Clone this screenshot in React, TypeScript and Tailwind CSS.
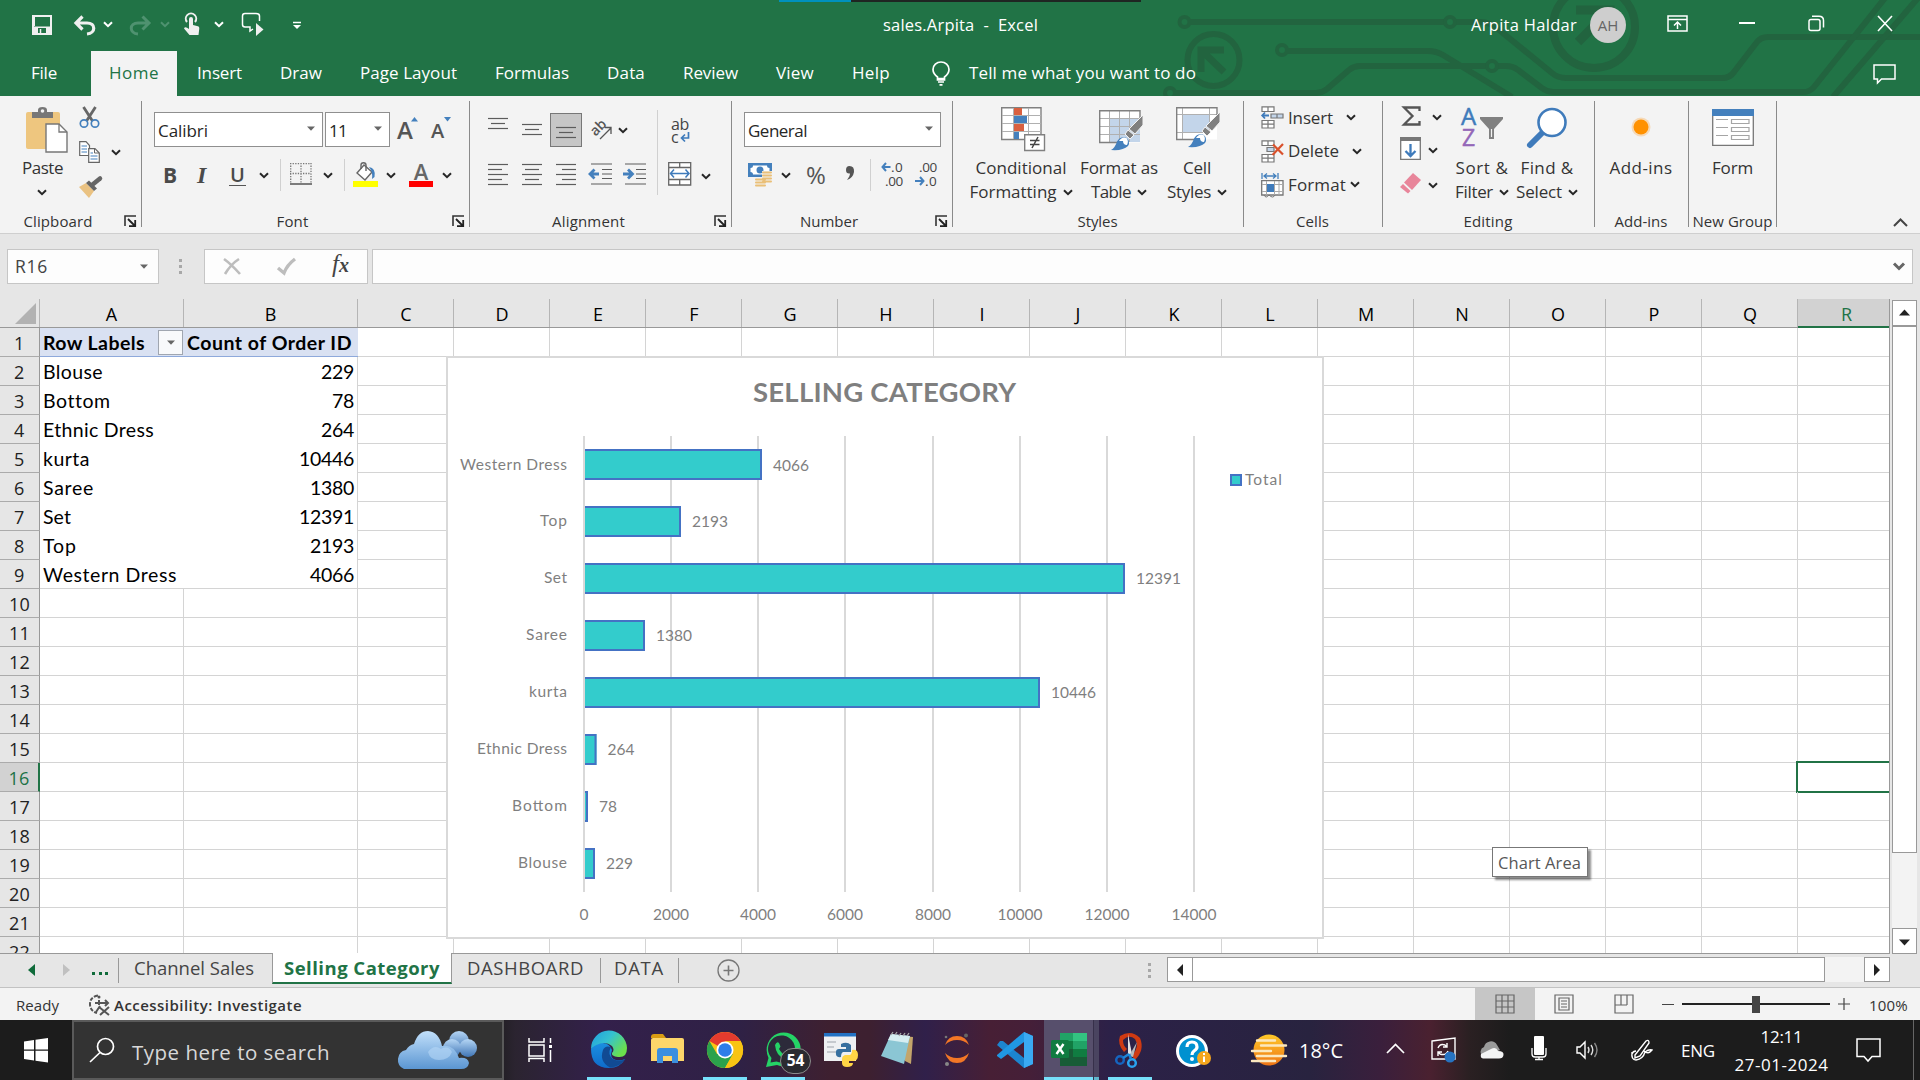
import { useLayoutEffect, useRef, useState } from "react";
import type { ReactNode } from "react";

/* Text that is tracked so that it fills exactly the given width. */
function T({ w, children, className = "" }: { w: number; children: string; className?: string }) {
  const ref = useRef<HTMLSpanElement>(null);
  const [ls, setLs] = useState(0);
  useLayoutEffect(() => {
    const el = ref.current;
    if (!el) return;
    const natural = el.getBoundingClientRect().width - ls * children.length;
    setLs((w - natural) / children.length);
  }, [w, children]);
  return (
    <span className={"block shrink-0 whitespace-pre " + className} style={{ width: w }}>
      <span ref={ref} className="inline-block" style={{ letterSpacing: ls }}>
        {children}
      </span>
    </span>
  );
}

function S({ w, h, className = "", children }: { w: number; h: number; className?: string; children: ReactNode }) {
  return (
    <svg width={w} height={h} viewBox={`0 0 ${w} ${h}`} fill="none" className={"block shrink-0 overflow-visible " + className}>
      {children}
    </svg>
  );
}

const Chev = ({ className = "", color = "#262626" }: { className?: string; color?: string }) => (
  <S w={10} h={7} className={className}>
    <path d="M1 1.2 5 5.2 9 1.2" stroke={color} strokeWidth="2" />
  </S>
);
const Tri = ({ className = "" }: { className?: string }) => (
  <S w={8} h={5} className={className}>
    <path d="M0 .5H8L4 4.8Z" fill="#666" />
  </S>
);
const Sep = ({ className = "" }: { className?: string }) => <div className={"w-px shrink-0 bg-[#d0d0d0] " + className} />;
const Launcher = ({ className = "" }: { className?: string }) => (
  <S w={13} h={12} className={className}>
    <path d="M1 11V1H12" stroke="#333" strokeWidth="1.6" />
    <path d="M4 4 11 11M11.2 5V11.2H5" stroke="#222" strokeWidth="1.8" />
  </S>
);

function Group({ width, label, lw, launcher, children }: { width: string; label: string; lw: number; launcher?: boolean; children: ReactNode }) {
  return (
    <section className={"relative flex h-[137px] shrink-0 flex-col " + width}>
      <div className="h-[114px] shrink-0">{children}</div>
      <div className="flex h-[23px] items-center justify-center text-[15px] leading-[20px] text-[#333]">
        <T w={lw} className="-mt-px">{label}</T>
      </div>
      {launcher && <Launcher className="absolute right-[5px] bottom-[6px]" />}
      <div className="absolute right-0 top-[5px] h-[126px] w-px bg-[#8a8a8a]" />
    </section>
  );
}

/* ---------- title bar ---------- */
function Circuit() {
  return (
    <svg width="760" height="96" viewBox="1160 0 760 96" fill="none" stroke="#22643f" strokeWidth="6" className="pointer-events-none absolute right-0 top-0">
      <circle cx="1184.500" cy="22" r="5" strokeWidth="4" />
      <path d="M1190 22H1444M1456 22H1480Q1490 22 1498 29L1552 73Q1558 78 1566 78H1722Q1730 78 1734 72L1757 42Q1761 37 1768 37H1920" />
      <circle cx="1450" cy="22" r="5" strokeWidth="4" />
      <circle cx="1213.500" cy="60" r="26" />
      <path d="M1201 72V50H1224M1202 51 1224 72" strokeWidth="7" />
      <circle cx="1282" cy="50" r="5" strokeWidth="4" />
      <path d="M1288 51H1428Q1436 51 1443 55L1512 97" />
      <circle cx="1170" cy="93" r="5" strokeWidth="4" />
      <path d="M1176 93H1316Q1322 93 1327 89L1349 70Q1354 66 1360 66H1486M1498 66H1506Q1513 66 1518 70L1542 88Q1547 92 1553 92H1803Q1810 92 1814 87L1885 -2M1833 97 1918 -2" />
      <circle cx="1492" cy="66" r="5" strokeWidth="4" />
      <circle cx="1594" cy="27" r="41" strokeWidth="8" />
      <path d="M1576 10H1610V34M1608 12 1578 42" strokeWidth="9" />
    </svg>
  );
}

function TitleBar() {
  return (
    <div className="relative flex h-[51px] items-start text-[16.500px] text-white *:shrink-0">
      <div className="absolute left-[779px] top-0 flex h-[2px] w-[362px]">
        <div className="w-[72px] bg-[#0091bd]" />
        <div className="flex-1 bg-[#1f2522]" />
      </div>
      <S w={20} h={20} className="ml-[32px] mt-[15px]">
        <path d="M1 1H19V19H1Z" stroke="#f0f0f0" strokeWidth="2" />
        <path d="M1 11.500H19V19H14V13H6V19H1Z" fill="#f0f0f0" />
        <path d="M2 1V11" stroke="#f0f0f0" strokeWidth="2" />
        <path d="M8.500 14V19" stroke="#f0f0f0" strokeWidth="1.500" />
      </S>
      <S w={23} h={20} className="ml-[21px] mt-[15px]">
        <path d="M3 8H14C23 8 23 18 14 19M9.500 1.500 3 8 9.500 14.500" stroke="#f0f0f0" strokeWidth="3.200" />
      </S>
      <Chev className="ml-[7px] mt-[21px]" color="#fff" />
      <S w={23} h={20} className="ml-[16px] mt-[15px]">
        <path d="M20 8H9C0 8 0 18 9 19M13.500 1.500 20 8 13.500 14.500" stroke="#4f9270" strokeWidth="3" />
      </S>
      <Chev className="ml-[8px] mt-[21px]" color="#4f9270" />
      <S w={18} h={23} className="ml-[13px] mt-[13px]">
        <path d="M4 9A5.200 5.200 0 1 1 12 9" stroke="#f0f0f0" strokeWidth="2" />
        <path d="M6 6a2 2 0 0 1 4 0v6l5 1.200q1.500.5 1.300 2.300L15.500 22H6.500L1 15.500q1-2.500 5 .5Z" fill="#f0f0f0" />
      </S>
      <Chev className="ml-[13px] mt-[21px]" color="#fff" />
      <S w={24} h={24} className="ml-[17px] mt-[12px]">
        <path d="M12 17 9 19V15H4Q1.500 15 1.500 12.500V4Q1.500 1.500 4 1.500H15Q18.500 1.500 18.500 4V9" stroke="#fff" strokeWidth="1.500" />
        <path d="M15 11 22.500 17.500 15 24Z" fill="#f0f0f0" />
      </S>
      <S w={8} h={9} className="ml-[28px] mt-[21px]">
        <path d="M0 1.500H8" stroke="#fff" strokeWidth="1.500" />
        <path d="M0 4H8L4 8Z" fill="#fff" />
      </S>
      <T w={155} className="ml-[582px] mt-[13px] leading-[24px]">{"sales.Arpita  -  Excel"}</T>
      <T w={106} className="ml-[433px] mt-[13px] leading-[24px]">Arpita Haldar</T>
      <div className="ml-[13px] mt-[7px] flex h-9 w-9 items-center justify-center rounded-full bg-[#cecece] text-[15px] text-[#666]">AH</div>
      <S w={21} h={17} className="ml-[41px] mt-[15px]">
        <path d="M1 1H20V16H1ZM1 4.500H20M10.500 14V7.500M7 10.500 10.500 7 14 10.500" stroke="#fff" strokeWidth="1.500" />
      </S>
      <div className="ml-[51px] mt-[22px] h-[1.500px] w-4 bg-white" />
      <S w={17} h={17} className="ml-[53px] mt-[15px]">
        <path d="M3.500 4.500H10Q12 4.500 12 6.500V13.500Q12 15.500 10 15.500H3Q1 15.500 1 13.500V6.500Q1 4.500 3 4.500ZM4 1.200H11Q15.500 1.200 15.500 5.500V12.500" stroke="#fff" strokeWidth="1.500" />
      </S>
      <S w={16} h={17} className="ml-[52px] mt-[15px]">
        <path d="M1 1 15 16M15 1 1 16" stroke="#fff" strokeWidth="1.600" />
      </S>
    </div>
  );
}

function TabBar() {
  return (
    <div className="relative flex h-[45px] items-center pb-0.5 text-[17px] leading-[24px] text-white *:shrink-0">
      <T w={26} className="ml-[31px]">File</T>
      <div className="ml-[34px] -mb-0.5 flex h-[45px] w-[86px] items-center justify-center bg-[#f3f3f3] pb-0.5 text-[#217346]">
        <T w={50}>Home</T>
      </div>
      <T w={45} className="ml-[20px]">Insert</T>
      <T w={42} className="ml-[38px]">Draw</T>
      <T w={97} className="ml-[38px]">Page Layout</T>
      <T w={74} className="ml-[38px]">Formulas</T>
      <T w={38} className="ml-[38px]">Data</T>
      <T w={55} className="ml-[38px]">Review</T>
      <T w={38} className="ml-[38px]">View</T>
      <T w={38} className="ml-[38px]">Help</T>
      <S w={18} h={25} className="ml-[42px] mt-px">
        <path d="M5.500 19V16Q1 12.500 1 8.500A8 7.500 0 0 1 17 8.500Q17 12.500 12.500 16V19ZM5.500 17.500H12.500M6 21H12M7.500 23.800H10.500" stroke="#fff" strokeWidth="1.700" />
      </S>
      <T w={227} className="ml-[19px]">Tell me what you want to do</T>
      <S w={23} h={21} className="ml-auto mr-[24px] mt-1">
        <path d="M1 1H22V15H8.500L4.500 19V15H1Z" stroke="#fff" strokeWidth="1.500" />
      </S>
    </div>
  );
}

/* ---------- ribbon icons ---------- */
const PasteIcon = () => (
  <S w={42} h={46}>
    <rect x="0" y="5" width="34" height="37" rx="2" fill="#eec67f" />
    <path d="M6 5H12V3Q12 0 16.500 0T21 3V5H27V11H6Z" fill="#777" />
    <circle cx="16.500" cy="4" r="1.800" fill="#f3f3f3" />
    <path d="M20 17H33L41 25V45H20Z" fill="#fff" stroke="#777" strokeWidth="1.400" />
    <path d="M33 17V25H41" stroke="#777" strokeWidth="1.300" />
  </S>
);
const CutIcon = () => (
  <S w={21} h={23}>
    <path d="M4.500 1 13.500 15M16.500 1 7.500 15" stroke="#666" strokeWidth="2.800" />
    <circle cx="5" cy="17.500" r="3.700" stroke="#4480bd" strokeWidth="1.700" />
    <circle cx="16" cy="17.500" r="3.700" stroke="#4480bd" strokeWidth="1.700" />
  </S>
);
const CopyIcon = () => (
  <S w={21} h={22}>
    <path d="M.7.7H7L10.500 4.500V14.500H.7Z" fill="#fff" stroke="#666" strokeWidth="1.200" />
    <path d="M2.500 5H8M2.500 8H8M2.500 11H8" stroke="#4480bd" />
    <path d="M9.700 7.700H16L20.300 12V21.300H9.700Z" fill="#fff" stroke="#666" strokeWidth="1.200" />
    <path d="M15.500 8V12H20" stroke="#666" />
    <path d="M11.500 12H14M11.500 15H18.500M11.500 18H18.500" stroke="#4480bd" strokeWidth="1.200" />
  </S>
);
const PainterIcon = () => (
  <S w={23} h={21}>
    <path d="M0 10 7 6 15 14 10 21Z" fill="#eac282" />
    <path d="M7 6 10 3.500 18 11.500 15 14Z" fill="#666" />
    <path d="M13 8 21 1.500" stroke="#666" strokeWidth="4.500" strokeLinecap="round" />
  </S>
);
const Lines = ({ rows }: { rows: [number, number][] }) => (
  <S w={20} h={rows.length * 5}>
    {rows.map(([a, b], i) => (
      <path key={i} d={`M${a} ${i * 5 + 1.5}H${b}`} stroke="#5c5c5c" strokeWidth="1.200" />
    ))}
  </S>
);
const short: [number, number][] = [[0, 20], [3, 17], [0, 20]];

function Indent({ right }: { right?: boolean }) {
  return (
    <S w={24} h={22}>
      <path d="M2 1H23M13 6.500H23M13 11H23M13 15.500H23M2 21H23" stroke="#5c5c5c" strokeWidth="1.200" />
      <path d={right ? "M0 11H9M5 6.500 9.500 11 5 15.500" : "M10 11H1.500M5.500 6.500 1 11 5.500 15.500"} stroke="#4480bd" strokeWidth="2.800" />
    </S>
  );
}

const Brush = () => (
  <g>
    <path d="M44 8V18L36 27 30 22Z" fill="#808080" stroke="#f3f3f3" strokeWidth="1" />
    <path d="M29 23 35 28 31 32 26 27Z" fill="#808080" stroke="#f3f3f3" strokeWidth="1" />
    <path d="M12 43Q16 41 18 34.500 21 29 27 30.500 32 34 29 39 24 44 12 43Z" fill="#4480bd" />
    <path d="M20 34Q23 29 27.500 31 30 34 28 38 24 38 24 34Z" fill="#fff" />
  </g>
);
const Combo = ({ text, tw, width }: { text: string; tw: number; width: string }) => (
  <div className={"flex h-[35px] shrink-0 items-center border border-[#8f8f8f] bg-white pl-[3px] text-[17px] leading-[24px] text-[#262626] " + width}>
    <T w={tw} className="mt-0.5">{text}</T>
    <Tri className="ml-auto mr-[7px] -mt-0.5" />
  </div>
);

const Arrow = ({ left }: { left?: boolean }) => (
  <S w={10} h={10} className="mt-px">
    <path d={left ? "M9.500 5H1.500M5 1 1.500 5 5 9" : "M0 5H8M5 1 8.500 5 5 9"} stroke="#4480bd" strokeWidth="2" />
  </S>
);
function Decimal({ inc }: { inc?: boolean }) {
  return (
    <div className="h-[25px] w-[24px] text-[13.500px] leading-[12px] text-[#444]">
      <div className="flex h-3 items-center justify-end">
        {inc && <Arrow left />}
        <T w={inc ? 12 : 18}>{inc ? ".0" : ".00"}</T>
      </div>
      <div className="mt-0.5 flex h-3 items-center justify-end">
        {!inc && <Arrow />}
        <T w={inc ? 18 : 12}>{inc ? ".00" : ".0"}</T>
      </div>
    </div>
  );
}

function CellsIcon({ kind }: { kind: "insert" | "delete" | "format" }) {
  if (kind === "format")
    return (
      <S w={23} h={25}>
        <path d="M1 0V6M17 0V6M3 3H15M6 .5 3 3 6 5.500M12 .5 15 3 12 5.500" stroke="#4480bd" strokeWidth="1.300" />
        <path d="M.7 7.700H22V22H.7Z" fill="#fff" stroke="#777" strokeWidth="1.300" />
        <path d="M1 11.500H22M1 18.500H22M5.500 8V22M13.500 8V22M18 8V22" stroke="#aaa" />
        <rect x="6" y="11" width="7" height="8" fill="#3f7bbb" />
        <path d="M3 22Q5 26 8 22 12 26 14 22" stroke="#777" />
      </S>
    );
  return (
    <S w={23} h={23}>
      <path d="M1 .8H13V5.500H1ZM7 1V5.500M1 14.500H13V22H1ZM7 14.500V22M1 18.200H13" fill="#fff" stroke="#777" strokeWidth="1.200" />
      {kind === "insert" ? (
        <g>
          <path d="M10 8H22V12H10ZM16 8V12" fill="#c3d5ea" stroke="#777" strokeWidth="1.200" />
          <path d="M8 9.500H1.500M4 6.500 1.200 9.500 4 12.500" stroke="#3f7bbb" strokeWidth="1.800" />
        </g>
      ) : (
        <g>
          <path d="M6 7.500H13V11.500H6Z" fill="#c3d5ea" stroke="#777" strokeWidth="1.200" />
          <path d="M12 4.500 22 14.500M22 4 11.500 15" stroke="#d9512c" strokeWidth="2.200" />
        </g>
      )}
    </S>
  );
}

const BigLabel = ({ a, aw, b, bw }: { a: string; aw: number; b?: string; bw?: number }) => (
  <div className="flex flex-col items-center text-[17px] leading-[24px] text-[#333]">
    <T w={aw}>{a}</T>
    {b && (
      <div className="flex items-center">
        <T w={bw ?? 0}>{b}</T>
        <Chev className="ml-[6px]" />
      </div>
    )}
  </div>
);

function Ribbon() {
  return (
    <div className="flex h-[138px] border-b border-[#cfcfcf] bg-[#f3f3f3]">
      <Group width="w-[142px] pr-[26px]" label="Clipboard" lw={69} launcher>
        <div className="flex *:shrink-0">
          <div className="flex w-[68px] flex-col items-end pt-[11px]">
            <PasteIcon />
            <T w={41} className="mr-[5px] mt-[3px] text-[17px] leading-[24px] text-[#333]">Paste</T>
            <Chev className="mr-[21px] mt-[9px]" />
          </div>
          <div className="flex w-[55px] flex-col pl-[11px] pt-[10px]">
            <CutIcon />
            <div className="mt-[12px] flex items-center">
              <CopyIcon />
              <Chev className="ml-[11px]" />
            </div>
            <div className="mt-[14px]"><PainterIcon /></div>
          </div>
        </div>
      </Group>

      <Group width="w-[328px] pr-[27px]" label="Font" lw={32} launcher>
        <div className="flex h-[51px] pl-[12px] pt-[16px] *:shrink-0">
          <Combo text="Calibri" tw={50} width="w-[169px]" />
          <Combo text="11" tw={18} width="ml-0.5 w-[65px]" />
          <div className="ml-[7px] flex w-[28px] items-start text-[24px] font-semibold leading-[35px] text-[#555]">
            <span className="w-[14px] shrink-0">A</span>
            <S w={7} h={5} className="mt-[5px]"><path d="M0 4.500H7L3.500 0Z" fill="#4480bd" /></S>
          </div>
          <div className="ml-[6px] flex items-start text-[20px] font-semibold leading-[38px] text-[#555]">
            <span className="w-[13px] shrink-0">A</span>
            <S w={7} h={5} className="mt-[5px]"><path d="M0 0H7L3.500 4.500Z" fill="#4480bd" /></S>
          </div>
        </div>
        <div className="mt-[11px] flex h-[34px] items-center text-[#4a4a4a] *:shrink-0">
          <span className="ml-[21px] w-[16px] text-[21px] font-bold leading-[30px]">B</span>
          <span className="ml-[18px] w-[14px] font-['Liberation_Serif'] text-[24px] font-bold italic leading-[30px]">I</span>
          <span className="ml-[18px] w-[17px] border-b border-[#555] text-center text-[20px] font-semibold leading-[21px]">U</span>
          <Chev className="ml-[13px] mt-px" />
          <Sep className="ml-[11px] h-[32px]" />
          <S w={22} h={22} className="ml-[9px] -mt-0.5">
            <path d="M.7 0V20M11 0V20M21 0V20M0 .7H21M0 10.500H21" stroke="#777" strokeWidth="1.300" strokeDasharray="1.300 1.300" />
            <path d="M0 21H22" stroke="#555" strokeWidth="1.500" />
          </S>
          <Chev className="ml-[11px] mt-px" />
          <Sep className="ml-[11px] h-[32px]" />
          <S w={25} h={25} className="ml-[8px] -mt-0.5">
            <path d="M4 11 11 3 19 10 12 18Z" fill="#fff" stroke="#666" strokeWidth="1.400" />
            <path d="M8 7V3Q8 .7 10.500.7T13 3V9" stroke="#666" strokeWidth="1.400" />
            <path d="M16 5Q23 6 21.500 15L19 17Q20 10 16 5Z" fill="#4480bd" />
            <path d="M0 19H25V25H0Z" fill="#ff0" />
          </S>
          <Chev className="ml-[8px] mt-px" />
          <div className="-mt-0.5 ml-[13px] h-[25px] w-[24px] border-b-[6px] border-[#f00] text-center text-[22px] font-semibold leading-[19px] text-[#666]">A</div>
          <Chev className="ml-[9px] mt-px" />
        </div>
      </Group>

      <Group width="w-[262px] pr-[25px]" label="Alignment" lw={73} launcher>
        <div className="flex *:shrink-0">
          <div className="w-[187px]">
            <div className="flex h-[50px] items-start pl-[18px] pt-[16px] *:shrink-0">
              <div className="mt-[5px]"><Lines rows={short} /></div>
              <div className="ml-[14px] mt-[11px]"><Lines rows={short} /></div>
              <div className="ml-[8px] mt-px flex h-[34px] w-[32px] items-end justify-center border border-[#777] bg-[#c6c6c6] pb-[5px]"><Lines rows={short} /></div>
              <S w={22} h={22} className="ml-[9px] mt-[7px]">
                <text x="0" y="13" fontSize="14" fontWeight="600" fill="#555" transform="rotate(-45 8 10)" textLength="17">ab</text>
                <path d="M9 20 20 9M20 15V8.500H14" stroke="#555" strokeWidth="1.300" />
              </S>
              <Chev className="ml-[5px] mt-[15px]" />
            </div>
            <div className="mt-[17px] flex items-center pl-[18px]">
              <Lines rows={[[0, 20], [0, 14], [0, 20], [0, 14], [0, 20]]} />
              <div className="ml-[14px]"><Lines rows={[[0, 20], [3, 17], [0, 20], [3, 17], [0, 20]]} /></div>
              <div className="ml-[14px]"><Lines rows={[[0, 20], [6, 20], [0, 20], [6, 20], [0, 20]]} /></div>
              <div className="-mt-1 ml-[13px]"><Indent /></div>
              <div className="-mt-1 ml-[10px]"><Indent right /></div>
            </div>
          </div>
          <Sep className="mt-[14px] h-[85px]" />
          <div className="ml-[10px] pt-[22px]">
            <div className="ml-[3px] h-[28px] text-[16px] leading-[13px] text-[#444]">
              <T w={18}>ab</T>
              <div className="flex items-start">
                <span className="w-[9px]">c</span>
                <S w={10} h={11} className="mt-px"><path d="M8.500 0V6H2M5 2.500 1.500 6 5 9.500" stroke="#3f7bbb" strokeWidth="1.700" /></S>
              </div>
            </div>
            <div className="mt-[16px] flex items-center">
              <S w={24} h={24}>
                <path d="M.7.7H22.700V23H.7ZM.7 5.500H22.700M.7 17.500H22.700M11.700 1V5.500M11.700 17.500V23" fill="#fff" stroke="#666" strokeWidth="1.300" />
                <path d="M2 11.500H21M6 7.500 2.500 11.500 6 15.500M17.500 7.500 21 11.500 17.500 15.500" stroke="#3f7bbb" strokeWidth="1.500" />
              </S>
              <Chev className="ml-[9px] mt-1" />
            </div>
          </div>
        </div>
      </Group>

      <Group width="w-[221px] pr-[27px]" label="Number" lw={58} launcher>
        <div className="flex pl-[12px] pt-[16px]"><Combo text="General" tw={59} width="w-[197px]" /></div>
        <div className="mt-[11px] flex h-[34px] w-[215px] items-center *:shrink-0">
          <S w={24} h={25} className="ml-[16px] -mt-0.5">
            <rect x="0" y="1" width="24" height="14" fill="#4480bd" />
            <path d="M5 3.500H19Q19 6 21.500 6V10Q19 10 19 12.500H5Q5 10 2.500 10V6Q5 6 5 3.500Z" fill="#fff" />
            <circle cx="12" cy="8" r="3.500" fill="#4480bd" />
            <path d="M14 9H24V22H18V24H7V16H14Z" fill="#f3f3f3" />
            <path d="M15 10.500H23M15 13.500H23M15 16.500H23M15 19.500H23M8 17.500H17M8 20.500H17M8 23.500H17" stroke="#eabf77" strokeWidth="2" strokeLinecap="round" />
          </S>
          <Chev className="ml-[9px] mt-px" />
          <span className="ml-[14px] w-[22px] text-center text-[24px] leading-[30px] text-[#555]">%</span>
          <S w={10} h={16} className="ml-[18px] -mt-1">
            <path d="M4.500 1Q9.500 1 9 7 8 13 2 15 5 11 5 8.500 1 9 1 5 1 1 4.500 1Z" fill="#555" />
          </S>
          <Sep className="ml-[15px] h-[32px]" />
          <div className="-mt-1 ml-[8px]"><Decimal inc /></div>
          <div className="-mt-1 ml-[10px]"><Decimal /></div>
        </div>
      </Group>

      <Group width="w-[291px] pr-[2px]" label="Styles" lw={40}>
        <div className="flex pt-[11px] *:shrink-0">
          <div className="ml-[12px] flex w-[112px] flex-col items-center">
            <S w={45} h={45} className="ml-1">
              <path d="M.7.7H40V32.500H.7Z" fill="#fff" stroke="#808080" strokeWidth="1.400" />
              <path d="M1 8.500H40M1 16.500H40M1 24.500H40M12.500 1V32M27.500 1V32" stroke="#b0b0b0" />
              <path d="M13 1H21V8H13ZM13 17H23V24H13Z" fill="#d9603f" />
              <path d="M13 9H26V16H13ZM13 25H18V32H13Z" fill="#4480bd" />
              <path d="M23.700 27.700H43.500V43.500H23.700Z" fill="#fff" stroke="#808080" strokeWidth="1.400" />
              <path d="M29 33.500H38.500M29 37.500H38.500M37 30 31 41" stroke="#444" strokeWidth="1.500" />
            </S>
            <div className="mt-[4px]"><BigLabel a="Conditional" aw={91} b="Formatting" bw={87} /></div>
          </div>
          <div className="-ml-[2px] flex w-[88px] flex-col items-center">
            <S w={45} h={45} className="ml-1">
              <path d="M.7 3.700H41V35.500H.7Z" fill="#fff" />
              <path d="M11 12H41V35H11Z" fill="#c3d5ea" />
              <path d="M.7 11.500H41M.7 19.500H41M.7 27.500H41M10.500 4V35M20.500 4V35M30.500 4V35" stroke="#b0b0b0" />
              <path d="M41 14V3.700H.7V35.500H20" stroke="#808080" strokeWidth="1.400" />
              <Brush />
            </S>
            <div className="mt-[4px]"><BigLabel a="Format as" aw={78} b="Table" bw={40} /></div>
          </div>
          <div className="flex w-[68px] flex-col items-center">
            <S w={45} h={45} className="ml-[2px]">
              <path d="M.7.7H41V32.500H.7Z" fill="#fff" />
              <path d="M7 7H34V26H7Z" fill="#c3d5ea" />
              <path d="M1 7.500H41M1 25.500H34M6.500 1V32M33.500 1V26" stroke="#b0b0b0" />
              <path d="M41 12V.7H.7V32.500H18" stroke="#808080" strokeWidth="1.400" />
              <g transform="translate(0 -3)"><Brush /></g>
            </S>
            <div className="mt-[4px]"><BigLabel a="Cell" aw={28} b="Styles" bw={44} /></div>
          </div>
        </div>
      </Group>

      <Group width="w-[139px] pr-[2px]" label="Cells" lw={33}>
        <div className="flex flex-col pl-[17px] pt-[9px] text-[17px] leading-[24px] text-[#333]">
          <div className="flex h-[25px] items-center"><CellsIcon kind="insert" /><T w={45} className="ml-[4px]">Insert</T><Chev className="ml-[13px]" /></div>
          <div className="mt-[9px] flex h-[25px] items-center"><CellsIcon kind="delete" /><T w={51} className="-mt-px ml-[4px]">Delete</T><Chev className="ml-[13px]" /></div>
          <div className="mt-[9px] flex h-[25px] items-center"><CellsIcon kind="format" /><T w={58} className="-mt-px ml-[4px]">Format</T><Chev className="-mt-0.5 ml-[4px]" /></div>
        </div>
      </Group>

      <Group width="w-[212px] pr-[2px]" label="Editing" lw={49}>
        <div className="flex *:shrink-0">
          <div className="flex w-[68px] flex-col pl-[17px] pt-[10px]">
            <div className="flex items-center">
              <S w={19} h={20} className="ml-0.5"><path d="M17.500 5V1.500H2L10.500 10 2 18.500H17.500V15" stroke="#555" strokeWidth="2.300" /></S>
              <Chev className="ml-[11px] mt-0.5" />
            </div>
            <div className="mt-[11px] flex items-center">
              <S w={21} h={23}>
                <path d="M.7.700H20.300V22.300H.7Z" fill="#fff" stroke="#777" strokeWidth="1.300" />
                <path d="M0 0H21V4H0Z" fill="#777" />
                <path d="M10.500 7V19M5.500 14 10.500 19 15.500 14" stroke="#3f7bbb" strokeWidth="2.300" />
              </S>
              <Chev className="ml-[7px] mt-1" />
            </div>
            <div className="mt-[13px] flex items-center">
              <S w={21} h={21}>
                <path d="M13 0 21 7 12 17 4 9.500Z" fill="#e8859a" />
                <path d="M3 11 10.500 18 8 20.500 0 14Z" fill="#e8859a" />
              </S>
              <Chev className="ml-[7px] mt-1" />
            </div>
          </div>
          <div className="flex w-[62px] flex-col items-center pt-[11px]">
            <S w={43} h={45}>
              <text x="0" y="18" fontSize="24" fill="#3f7bbb" stroke="#3f7bbb" strokeWidth=".5">A</text>
              <text x="1" y="39" fontSize="23" fill="#9467b8" stroke="#9467b8" strokeWidth=".5">Z</text>
              <path d="M19 10H42V12L33 22V32H28V22L19 12Z" fill="#808080" />
              <path d="M30.500 22V30" stroke="#f3f3f3" strokeWidth="1.200" />
            </S>
            <div className="mt-[4px]"><BigLabel a="Sort &" aw={53} b="Filter" bw={38} /></div>
          </div>
          <div className="flex w-[68px] flex-col items-center pt-[11px]">
            <S w={41} h={45}>
              <path d="M3 38 17 24" stroke="#3f7bbb" strokeWidth="6" strokeLinecap="round" />
              <circle cx="25" cy="15.500" r="13.500" fill="#fff" stroke="#3f7bbb" strokeWidth="2.600" />
            </S>
            <div className="mt-[4px]"><BigLabel a="Find &" aw={53} b="Select" bw={46} /></div>
          </div>
        </div>
      </Group>

      <Group width="w-[94px] pr-[2px]" label="Add-ins" lw={53}>
        <div className="flex flex-col items-center pt-[11px]">
          <S w={45} h={45}><circle cx="22" cy="20" r="9.500" fill="#ff8c00" opacity=".25" /><circle cx="22" cy="20" r="7.500" fill="#ff9100" /></S>
          <div className="mt-[4px]"><BigLabel a="Add-ins" aw={63} /></div>
        </div>
      </Group>

      <Group width="w-[88px] pr-[1px]" label="New Group" lw={80}>
        <div className="flex flex-col items-center pt-[11px]">
          <S w={42} h={45}>
            <path d="M.7 2.700H41.300V38.300H.7Z" fill="#fff" stroke="#777" strokeWidth="1.300" />
            <path d="M0 2H42V9H0Z" fill="#4480bd" />
            <path d="M4 12.500H16M4 20.500H16M4 28.500H16M19.500 12.500H37V16.500H19.500ZM19.500 20.500H37V24.500H19.500ZM19.500 28.500H37V32.500H19.500Z" stroke="#a5a5a5" strokeWidth="1.200" />
          </S>
          <div className="mt-[4px]"><BigLabel a="Form" aw={41} /></div>
        </div>
      </Group>
      <S w={15} h={9} className="ml-auto mr-[12px] mt-[122px]"><path d="M1 8 7.500 1.500 14 8" stroke="#444" strokeWidth="2" /></S>
    </div>
  );
}

const Dots = ({ className = "" }: { className?: string }) => (
  <div className={"flex w-[3px] shrink-0 flex-col gap-[3px] *:h-[3px] *:bg-[#a8a8a8] " + className}><i /><i /><i /></div>
);

function FormulaBar() {
  return (
    <div className="flex h-[65px] items-start bg-[#e6e6e6] pt-[15px] *:h-[35px] *:shrink-0">
      <div className="ml-[7px] flex w-[152px] items-center border border-[#c6c6c6] bg-[#fdfdfd] pl-[7px] text-[17.500px] text-[#444]">
        <T w={33}>R16</T>
        <Tri className="ml-auto mr-[10px]" />
      </div>
      <div className="ml-[20px] flex items-center"><Dots /></div>
      <div className="ml-[22px] flex w-[164px] items-center border border-[#c6c6c6] bg-[#fdfdfd]">
        <S w={18} h={17} className="ml-[18px]"><path d="M1 1Q8 6 17 16M16 1Q8 6 2 16" stroke="#bdbdbd" strokeWidth="2.600" /></S>
        <S w={20} h={17} className="ml-[36px]"><path d="M1 10 7 15Q10 7 18 1" stroke="#bdbdbd" strokeWidth="3.400" /></S>
        <span className="ml-[35px] -mt-1 font-['Liberation_Serif'] text-[25px] italic leading-[30px] tracking-[0px] text-[#444]">f<span className="text-[20px] font-bold">x</span></span>
      </div>
      <div className="ml-[4px] flex w-[1541px] items-center justify-end border border-[#c6c6c6] bg-[#fdfdfd] pr-[7px]">
        <S w={12} h={9}><path d="M1 1.500 6 6.500 11 1.500" stroke="#666" strokeWidth="3" /></S>
      </div>
    </div>
  );
}

/* ---------- sheet ---------- */
const columns = "CDEFGHIJKLMNOPQR".split("");
const data: [string, string, number, number][] = [
  ["Blouse", "229", 60, 33],
  ["Bottom", "78", 67, 22],
  ["Ethnic Dress", "264", 111, 33],
  ["kurta", "10446", 47, 55],
  ["Saree", "1380", 51, 44],
  ["Set", "12391", 28, 55],
  ["Top", "2193", 34, 44],
  ["Western Dress", "4066", 134, 44],
];

function SheetRow({ n }: { n: number }) {
  const d = n >= 2 && n <= 9 ? data[n - 2] : null;
  const active = n === 16;
  return (
    <div className="flex h-[29px] shrink-0 text-[19.500px] leading-[29px] text-black *:shrink-0">
      <div className={"flex w-[40px] justify-center border-b font-['Open_Sans'] text-[18px] leading-[30px] " + (active ? "border-b-[#ababab] border-r-2 border-r-[#217346] bg-[#d2d2d2] text-[#217346]" : "border-r border-b-[#ababab] border-r-[#999] bg-[#e6e6e6] text-[#222]")}>
        <T w={n > 9 ? 21 : 11}>{String(n)}</T>
      </div>
      {n === 1 && (
        <>
          <div className="flex w-[144px] items-center border-b border-[#8ea9db] bg-[#d9e1f2] pl-[3px] font-bold">
            <T w={102}>Row Labels</T>
            <div className="ml-auto mr-px flex h-[25px] w-[25px] items-center justify-center border border-[#a0a6b0] bg-[#f8f9fb]"><Tri /></div>
          </div>
          <div className="w-[174px] border-b border-[#8ea9db] bg-[#d9e1f2] pl-[3px] font-bold"><T w={165}>Count of Order ID</T></div>
        </>
      )}
      {d && (
        <>
          <div className={"w-[144px] pl-[3px] " + (n === 9 ? "border-b border-[#d4d4d4]" : "")}><T w={d[2]}>{d[0]}</T></div>
          <div className={"flex w-[174px] justify-end border-r border-[#d4d4d4] pr-[3px] " + (n === 9 ? "border-b" : "")}><T w={d[3]}>{d[1]}</T></div>
        </>
      )}
      {n > 9 && (
        <>
          <div className="w-[144px] border-b border-r border-[#d4d4d4]" />
          <div className="w-[174px] border-b border-r border-[#d4d4d4]" />
        </>
      )}
      {columns.map((c) => (
        <div key={c} className="relative w-[96px] border-b border-r border-[#d4d4d4]">
          {active && c === "R" && <div className="absolute -left-[2px] -top-[2px] h-[32px] w-[110px] border-2 border-[#217346]" />}
        </div>
      ))}
    </div>
  );
}

const bars: [string, number, number, number, number][] = [
  ["Western Dress", 4066, 762, 107, 36],
  ["Top", 2193, 681, 27, 36],
  ["Set", 12391, 1125, 23, 45],
  ["Saree", 1380, 645, 41, 36],
  ["kurta", 10446, 1040, 38, 45],
  ["Ethnic Dress", 264, 596.5, 90, 27],
  ["Bottom", 78, 588, 55, 18],
  ["Blouse", 229, 595, 49, 27],
];

function Chart() {
  return (
    <svg width="878" height="583" viewBox="446 356 878 583" className="absolute left-[446px] top-[57px] font-['Lato']" fill="#7f7f7f" fontSize="15.500">
      <rect x="447" y="357" width="876" height="581" fill="#fff" stroke="#d9d9d9" strokeWidth="2" />
      <text x="753" y="402" fontSize="27.500" fontWeight="bold" textLength="263">SELLING CATEGORY</text>
      {[0, 1, 2, 3, 4, 5, 6, 7].map((i) => {
        const x = Math.round(584 + i * 87.143);
        const label = String(i * 2000);
        const w = label.length * 9;
        return (
          <g key={i}>
            <path d={`M${x} 436V892`} stroke="#d9d9d9" strokeWidth="2" />
            <text x={x - w / 2} y="920" textLength={w}>{label}</text>
          </g>
        );
      })}
      {bars.map(([name, value, end, nw, vw], i) => {
        const y = 449 + i * 57;
        const base = i === 0 ? y + 21 : y + 20;
        return (
          <g key={name}>
            <rect x="585" y={y} width={end - 585} height="31" fill="#33cccc" />
            <path d={`M585 ${y + 1}H${end - 1}V${y + 30}H585`} fill="none" stroke="#4472c4" strokeWidth="2" />
            <text x={567 - nw} y={base} textLength={nw}>{name}</text>
            <text x={end + 11} y={base + 1} textLength={vw}>{value}</text>
          </g>
        );
      })}
      <rect x="1231" y="475" width="10" height="10" fill="#33cccc" stroke="#4472c4" strokeWidth="2" />
      <text x="1245" y="485" textLength="37">Total</text>
    </svg>
  );
}

function Sheet() {
  return (
    <div className="flex h-[655px] bg-[#e6e6e6]">
      <div className="relative flex h-[655px] w-[1890px] flex-col overflow-hidden border-b border-r border-[#999] font-['Lato']">
        <div className="flex h-[29px] w-[2100px] shrink-0 border-b border-[#999] bg-[#e6e6e6] font-['Open_Sans'] text-[18px] leading-[31px] text-black *:shrink-0">
          <div className="flex w-[40px] items-end justify-end border-r border-[#b5b5b5] pb-[3px] pr-[3px]">
            <S w={21} h={21}><path d="M21 0V21H0Z" fill="#b2b2b2" /></S>
          </div>
          <div className="w-[144px] border-r border-[#b5b5b5] text-center">A</div>
          <div className="w-[174px] border-r border-[#b5b5b5] text-center">B</div>
          {columns.map((c) => (
            <div key={c} className={"w-[96px] pl-px text-center " + (c === "R" ? "-mb-px border-b-2 border-[#217346] bg-[#d2d2d2] text-[#217346]" : "border-r border-[#b5b5b5]")}>{c}</div>
          ))}
        </div>
        <div className="flex w-[2100px] flex-col bg-white">
          {Array.from({ length: 22 }, (_, i) => <SheetRow key={i} n={i + 1} />)}
        </div>
        <Chart />
        <div className="absolute left-[1492px] top-[548px] flex h-[30px] w-[96px] items-center border border-[#777] bg-white pl-[5px] font-['Open_Sans'] text-[16.500px] leading-[22px] text-[#575757] shadow-[3px_3px_2px_rgba(0,0,0,0.45)]">
          <T w={83} className="mt-px">Chart Area</T>
        </div>
      </div>
      <div className="ml-[2px] mt-px flex w-[25px] flex-col bg-[#f3f3f3]">
        <div className="flex h-[26px] items-center justify-center border border-[#999] bg-white"><S w={11} h={7}><path d="M0 6.500H11L5.500.500Z" fill="#222" /></S></div>
        <div className="h-[528px] border border-[#999] bg-white" />
        <div className="mt-[75px] flex h-[26px] items-center justify-center border border-[#999] bg-white pt-0.5"><S w={11} h={7}><path d="M0 .5H11L5.500 6.500Z" fill="#222" /></S></div>
      </div>
    </div>
  );
}

function SheetTabs() {
  return (
    <div className="relative flex h-[34px] items-start border-b border-[#c2c2c2] bg-[#e6e6e6] text-[18.500px] leading-[28px] text-[#444] *:shrink-0">
      <S w={7} h={12} className="ml-[28px] mt-[10px]"><path d="M7 0V12L0 6Z" fill="#0f6b3a" /></S>
      <S w={7} h={12} className="ml-[28px] mt-[10px]"><path d="M0 0V12L7 6Z" fill="#c0c0c0" /></S>
      <span className="ml-[22px] flex w-[16px] justify-between pt-[18px] *:h-[3px] *:w-[3px] *:bg-[#0f6b3a]"><i /><i /><i /></span>
      <div className="ml-[10px] mt-[4px] h-[25px] w-px bg-[#999]" />
      <T w={120} className="ml-[15px]">Channel Sales</T>
      <div className="ml-[18px] -mt-px flex h-[31px] w-[180px] justify-center border-x border-b-2 border-x-[#999] border-b-[#217346] bg-white font-bold text-[#217346]"><T w={156} className="mt-px">Selling Category</T></div>
      <T w={117} className="ml-[15px]">DASHBOARD</T>
      <div className="ml-[16px] mt-[4px] h-[25px] w-px bg-[#999]" />
      <T w={50} className="ml-[13px]">DATA</T>
      <div className="ml-[14px] mt-[4px] h-[25px] w-px bg-[#999]" />
      <S w={23} h={23} className="ml-[38px] mt-[5px]"><circle cx="11.500" cy="11.500" r="10.500" stroke="#777" strokeWidth="1.300" /><path d="M11.500 6.500V16.500M6.500 11.500H16.500" stroke="#777" strokeWidth="1.600" /></S>
      <Dots className="ml-[408px] mt-[9px]" />
      <div className="ml-[16px] mt-[3px] flex h-[25px] w-[723px] bg-[#f3f3f3]">
        <div className="flex w-[26px] items-center justify-center border border-[#999] bg-white"><S w={6} h={12}><path d="M6 0V12L0 6Z" fill="#222" /></S></div>
        <div className="-ml-px w-[633px] border border-[#999] bg-white" />
        <div className="ml-auto flex w-[26px] items-center justify-center border border-[#999] bg-white"><S w={6} h={12}><path d="M0 0V12L6 6Z" fill="#222" /></S></div>
      </div>
    </div>
  );
}

function StatusBar() {
  return (
    <div className="flex h-[32px] items-center bg-[#f3f3f3] text-[15px] leading-[20px] text-[#333] *:shrink-0">
      <T w={43} className="ml-[16px] mt-0.5">Ready</T>
      <S w={22} h={22} className="ml-[30px] mt-0.5">
        <path d="M9 1.500Q1 3 1 10 1 17 8 19" stroke="#555" strokeWidth="2" strokeDasharray="4 1.500" />
        <circle cx="10" cy="3" r="1.500" fill="#555" />
        <path d="M10 6V11M6 9H19M16 6 19 9 16 12M7 18 11 12M10 13 20 21M20 13 11 21" stroke="#555" strokeWidth="2" />
      </S>
      <T w={188} className="ml-[3px] mt-0.5 font-semibold">Accessibility: Investigate</T>
      <div className="ml-auto flex h-[32px] w-[60px] items-center justify-center bg-[#c6c6c6]">
        <S w={20} h={20} className="-ml-px"><path d="M1 1H19V19H1ZM1 7H19M1 13H19M7 1V19M13 1V19" stroke="#666" strokeWidth="1.200" /></S>
      </div>
      <S w={20} h={20} className="ml-[19px]"><path d="M1 1H19V19H1ZM5 4H15V16H5ZM7 7H13M7 10H13M7 13H13" stroke="#666" strokeWidth="1.200" /></S>
      <S w={20} h={20} className="ml-[40px]"><path d="M1 1H19V19H1ZM7 1V11M13 1V11M1 11H13" stroke="#666" strokeWidth="1.200" /></S>
      <div className="ml-[28px] h-px w-[12px] bg-[#444]" />
      <div className="ml-[8px] flex h-[17px] w-[148px] items-center">
        <div className="h-0.5 w-[70px] bg-[#222]" /><div className="h-[17px] w-[8px] bg-[#444]" /><div className="h-0.5 w-[70px] bg-[#222]" />
      </div>
      <S w={12} h={12} className="ml-[8px]"><path d="M6 0V12M0 6H12" stroke="#444" strokeWidth="1.200" /></S>
      <T w={39} className="ml-[19px] mr-[12px] mt-0.5">100%</T>
    </div>
  );
}

/* ---------- taskbar ---------- */
const TaskIcon = ({ width, line, children, className = "" }: { width: string; line?: boolean; children: ReactNode; className?: string }) => (
  <div className={"flex h-[60px] shrink-0 flex-col items-center justify-between " + width + " " + className}>
    <div className="flex h-[57px] items-center justify-center pt-[3px]">{children}</div>
    {line && <div className="h-[3px] w-[44px] bg-[#76e0fb]" />}
  </div>
);

function Taskbar() {
  return (
    <div className="flex h-[60px] items-center bg-[linear-gradient(90deg,#1c1c1c_0px,#1c1c1c_490px,#2b2430_515px,#33204b_600px,#2f2145_740px,#3e2030_830px,#3d2030_870px,#30204a_925px,#471f35_990px,#451f38_1030px,#2c2148_1110px,#28233f_1310px,#3a1f3c_1380px,#4a2130_1430px,#2a2022_1470px,#1c1c1c_1510px)] font-['Open_Sans'] text-white *:shrink-0">
      <S w={24} h={24} className="ml-[24px]"><path d="M0 3.500 10 2V11.500H0ZM11.500 1.700 24 0V11.500H11.500ZM0 12.800H10V22.500L0 21ZM11.500 12.800H24V24.500L11.500 22.700Z" fill="#fff" /></S>
      <div className="ml-[24px] flex h-[60px] w-[432px] items-center border-2 border-[#5a5a5a] bg-[#333]">
        <S w={26} h={26} className="ml-[15px]"><circle cx="16.500" cy="9.500" r="8" stroke="#fff" strokeWidth="1.700" /><path d="M11 15.500 1 25" stroke="#fff" strokeWidth="1.700" /></S>
        <T w={198} className="ml-[17px] mt-[3px] text-[20.500px] leading-[28px] text-[#d8d8d8]">Type here to search</T>
        <S w={84} h={40} className="ml-[64px]">
          <defs>
            <linearGradient id="cl" x1="0" y1="0" x2="0" y2="1"><stop offset="0" stopColor="#c2e0fb" /><stop offset="1" stopColor="#5b96d2" /></linearGradient>
            <linearGradient id="cb" x1="0" y1="0" x2="0" y2="1"><stop offset="0" stopColor="#b5d6f5" /><stop offset="1" stopColor="#3f75b5" /></linearGradient>
          </defs>
          <g fill="url(#cb)"><circle cx="65" cy="11" r="10" /><circle cx="74" cy="18" r="9" /><circle cx="58" cy="18" r="9" /></g>
          <path d="M10 39A10 10 0 0 1 12 20Q15 15 20 14 24 1 34 1 45 2 48 16 60 14 65 28 74 27 75 33 74 39 67 39Z" fill="url(#cl)" />
          <path d="M34 22Q40 14 47 19 54 15 58 22 55 30 45 30 36 30 34 22Z" fill="#b6d7f6" opacity=".6" />
        </S>
      </div>
      <S w={25} h={24} className="ml-[24px]"><path d="M1 0V4H16V0M1 7H16V18H1ZM1 24V20.500H16V24M22.500 0V5M22.500 12V24" stroke="#fff" strokeWidth="1.500" /><path d="M21 7H24V10H21Z" fill="#fff" /></S>
      <TaskIcon width="w-[58px]" line className="ml-[27px]">
        <S w={36} h={36}>
          <defs>
            <linearGradient id="e1" x1="0" y1="0" x2="1" y2=".6"><stop offset="0" stopColor="#1f9de0" /><stop offset=".5" stopColor="#35c1d0" /><stop offset="1" stopColor="#6be04c" /></linearGradient>
            <linearGradient id="e2" x1="0" y1="0" x2="0" y2="1"><stop offset="0" stopColor="#1b8fe0" /><stop offset="1" stopColor="#0f6bcb" /></linearGradient>
          </defs>
          <path d="M0 17Q0 36 18 36 29 36 34 27 30 29 25 28 18 26 21 18 18 10 10 11 2 12 0 17Z" fill="url(#e2)" />
          <path d="M0 17A18 18 0 0 1 36 16Q36 26 27 25 20 24 21 21 24 18 21 14 15 9 8 12 2 14 0 17Z" fill="url(#e1)" />
          <path d="M12 18Q8 30 19 35.500 29 35 34.500 27 28 30 22 27 16 23 20 15 14 13 12 18Z" fill="#114a93" />
        </S>
      </TaskIcon>
      <TaskIcon width="w-[58px]">
        <S w={33} h={29} className="-mt-1">
          <path d="M0 3Q0 0 3 0H12L15 4H0Z" fill="#d99c12" />
          <path d="M0 6Q0 4 2 4H31Q33 4 33 6V27H0Z" fill="#fdd66a" />
          <path d="M6 29V17Q6 14 9 14H24Q27 14 27 17V29H21V22H12V29Z" fill="#3b8fdf" />
        </S>
      </TaskIcon>
      <TaskIcon width="w-[58px]" line>
        <S w={36} h={36}>
          <circle cx="18" cy="18" r="18" fill="#f9c413" />
          <path d="M18 18 2.400 9A18 18 0 0 1 33.600 9Z" fill="#e33b2e" />
          <path d="M2.400 9A18 18 0 0 0 18 36L26 22 10 22Z" fill="#2ba24c" />
          <path d="M18 9H33.600A18 18 0 0 1 18 36L26 22Z" fill="#f9c413" />
          <circle cx="18" cy="18" r="8.500" fill="#fff" /><circle cx="18" cy="18" r="6.800" fill="#2e7de9" />
        </S>
      </TaskIcon>
      <TaskIcon width="w-[58px]" line className="relative">
        <S w={36} h={36}>
          <path d="M1 35 3.500 26Q0 18 3 11A17 17 0 1 1 12 33Z" fill="#25d366" />
          <path d="M5.500 30.500 6.500 26A13.500 13.500 0 1 1 11.500 29.500Z" fill="#2c2a3a" />
          <path d="M10 13Q12 9 14 11L15.500 14.500 14 17Q17 22 20 23L22 21 26 23Q26 28 20 27 11 24 10 13Z" fill="#25d366" />
        </S>
        <div className="absolute left-[26px] top-[28px] flex h-[26px] w-[31px] items-center justify-center rounded-full border border-[#8b8b8b] bg-[#2b2b30] text-[15.500px] font-bold">54</div>
      </TaskIcon>
      <TaskIcon width="w-[58px]">
        <S w={35} h={34}>
          <path d="M0 1H32V28H0Z" fill="#eef0f2" /><path d="M0 0H32V3.500H0Z" fill="#2272c4" />
          <path d="M3 9H12M3 14H10M3 19H12" stroke="#b8bcc2" strokeWidth="1.300" />
          <path d="M17 11Q23 8 27 12V19H19Q17 20 17 24 11 25 12 19 12 16 15 16H22V14H17Z" fill="#366f9f" />
          <path d="M28 17Q34 16 34 22 34 28 29 28H25V30H29Q29 34 23 34 18 34 18 30V26Q18 23 21 22H26Q28 21 28 17Z" fill="#ffd545" />
        </S>
      </TaskIcon>
      <TaskIcon width="w-[58px]">
        <S w={33} h={33} className="-mt-1 -ml-1">
          <path d="M12 3 32 5 30 32 24 29Z" fill="#c3a56b" />
          <path d="M10 2 29 4 23 32 0 24Z" fill="#8bc6d4" />
          <path d="M10 2 29 4 27 11 7 8Z" fill="#d6edf1" />
          <path d="M10 3 12 0M14 3 16 0M18 4 20 1M22 4 24 1M26 4 28 1" stroke="#aaa" strokeWidth="1.300" />
        </S>
      </TaskIcon>
      <TaskIcon width="w-[58px]">
        <S w={26} h={34}>
          <path d="M1 12Q4 3 13 3T25 12Q20 7 13 7T1 12ZM1 20Q4 30 13 30T25 20Q20 25 13 25T1 20Z" fill="#f37726" />
          <circle cx="22" cy="2.500" r="2" fill="#666" /><circle cx="3" cy="31" r="2" fill="#888" /><circle cx="2" cy="4" r="1.300" fill="#777" />
        </S>
      </TaskIcon>
      <TaskIcon width="w-[58px]">
        <S w={36} h={36}>
          <path d="M27 0 36 4V32L27 36 0 13 3 9 6 9 27 26Z" fill="#1c85cf" />
          <path d="M27 0 0 23V24L4 27 27 10Z" fill="#2097e3" />
          <path d="M27 0 36 4V32L27 36Z" fill="#3aaaf2" />
        </S>
      </TaskIcon>
      <div className="flex h-[60px] w-[55px] bg-[#574f6c]">
        <div className="flex w-[49px] flex-col justify-between">
          <div className="flex h-[57px] items-center justify-center pt-[2px] pl-[1px]">
            <S w={36} h={33}>
              <path d="M9 0H36V33H9Z" fill="#21a366" /><path d="M22 0H36V8H22Z" fill="#33c481" /><path d="M9 8H22V16H9Z" fill="#107c41" /><path d="M9 24H36V33H9Z" fill="#185c37" /><path d="M9 16H22V24H9Z" fill="#185c37" /><path d="M22 16H36V24H22Z" fill="#107c41" />
              <rect x="0" y="7" width="18" height="18" rx="1.500" fill="#107c41" />
              <path d="M5.500 11 12.500 21M12.500 11 5.500 21" stroke="#fff" strokeWidth="2.400" />
            </S>
          </div>
          <div className="h-[3px] bg-[#76e0fb]" />
        </div>
        <div className="flex w-[6px] items-end border-l border-[#37304a] bg-[#4a4460]"><div className="h-[3px] w-full bg-[#5fb6cc]" /></div>
      </div>
      <TaskIcon width="w-[58px]" line className="ml-[2px]">
        <S w={30} h={37}>
          <path d="M5 4Q16 -3 25 6 30 18 20 28L17 24Q25 14 20 7 14 2 8 8 8 14 12 17L9 20Q2 12 5 4Z" fill="#cf3a12" />
          <path d="M13 2 17 22 13 24Z" fill="#e4e4e4" /><path d="M22 10 14 24 18 25Z" fill="#b9b9b9" />
          <circle cx="5" cy="28" r="3.800" stroke="#1565c0" strokeWidth="2.500" /><circle cx="17" cy="31" r="3.800" stroke="#29a3ef" strokeWidth="2.500" />
          <path d="M8 26 14 22M16 27 14 22" stroke="#1d86d8" strokeWidth="2.500" />
        </S>
      </TaskIcon>
      <TaskIcon width="w-[58px]" className="ml-[6px]">
        <S w={36} h={36} className="mt-1">
          <ellipse cx="16" cy="17" rx="14.500" ry="14.500" fill="#0091d0" stroke="#fff" strokeWidth="3" />
          <path d="M11 13Q11 8 16 8T21 13Q21 15 18 17 16 18.500 16 21" stroke="#fff" strokeWidth="3.200" /><circle cx="16" cy="25" r="2" fill="#fff" />
          <circle cx="28" cy="24" r="7" fill="#f5a61d" /><path d="M28 22.500V28M28 19V21" stroke="#fff" strokeWidth="2" />
        </S>
      </TaskIcon>
      <S w={36} h={32} className="ml-[28px]">
        <defs><linearGradient id="su" x1="0" y1="0" x2="0" y2="1"><stop offset="0" stopColor="#ffc928" /><stop offset="1" stopColor="#ee7415" /></linearGradient></defs>
        <circle cx="18" cy="16" r="15.500" fill="url(#su)" />
        <path d="M6 6.500H24M10 11.500H35M1 17H20M6 22H35M1 27H24" stroke="#fbe8bf" strokeWidth="2.400" strokeLinecap="round" />
      </S>
      <T w={44} className="ml-[12px] mt-0.5 text-[20px] leading-[28px]">18°C</T>
      <S w={19} h={11} className="ml-[43px] -mt-[3px]"><path d="M1 10 9.500 1.500 18 10" stroke="#fff" strokeWidth="1.700" /></S>
      <S w={26} h={26} className="ml-[26px]">
        <path d="M1 4 24 1V22H1Z" stroke="#fff" strokeWidth="1.400" />
        <path d="M7 11Q9 6 14 8L16 10M16 6V10H12M17 14Q15 19 9 17L7 15M7 19V15H11" stroke="#fff" strokeWidth="1.400" />
        <circle cx="19" cy="20" r="5.500" fill="#2673c2" />
      </S>
      <S w={25} h={17} className="ml-[22px]"><path d="M4 14A5 5 0 0 1 5 5 7 7 0 0 1 18 3L21 8 8 14Z" fill="#9b9b9b" /><path d="M4 16.500Q1 16 2 12L12 7Q17 4 19 9 25 9 24.500 13 24 16.500 20 16.500Z" fill="#f4f4f4" /></S>
      <S w={16} h={24} className="-mt-1 ml-[27px]"><rect x="3" y="0" width="10" height="19" rx="1" fill="#fff" /><path d="M1 12V18Q1 21 4 21H12Q15 21 15 18V12M8 21V24M4 23.500H12" stroke="#fff" strokeWidth="1.300" /></S>
      <S w={24} h={20} className="ml-[29px]"><path d="M1 7H4L9 2V18L4 13H1Z" stroke="#fff" strokeWidth="1.400" /><path d="M12 7Q14 10 12 13M15 5Q18.500 10 15 15" stroke="#ddd" strokeWidth="1.400" /><path d="M18.500 3Q23.500 10 18.500 17" stroke="#888" strokeWidth="1.400" /></S>
      <S w={22} h={22} className="ml-[31px]"><path d="M4 16 15 2Q18 0 18 4L9 17 4 19ZM1 13Q0 21 5 21 12 20 14 13 18 10 21 11 17 16 13 12M5 12Q2 12 1 15" stroke="#fff" strokeWidth="1.400" /></S>
      <T w={34} className="ml-[28px] mt-px text-[17px] leading-[24px]">ENG</T>
      <div className="ml-[19px] mt-px flex w-[95px] flex-col items-center text-[17px] leading-[28px]">
        <T w={42}>12:11</T>
        <T w={94}>27-01-2024</T>
      </div>
      <S w={25} h={24} className="ml-[27px]"><path d="M1 1H24V18.500H16L12 23 8 18.500H1Z" stroke="#fff" strokeWidth="1.500" /></S>
      <div className="ml-auto mr-[6px] h-[60px] w-px bg-[#666]" />
    </div>
  );
}

export default function App() {
  return (
    <div className="flex h-[1080px] w-[1920px] flex-col overflow-hidden bg-[#e6e6e6] font-['Open_Sans',sans-serif] *:shrink-0">
      <header className="relative h-[96px] bg-[#217346]">
        <Circuit />
        <TitleBar />
        <TabBar />
      </header>
      <Ribbon />
      <FormulaBar />
      <Sheet />
      <SheetTabs />
      <StatusBar />
      <Taskbar />
    </div>
  );
}
